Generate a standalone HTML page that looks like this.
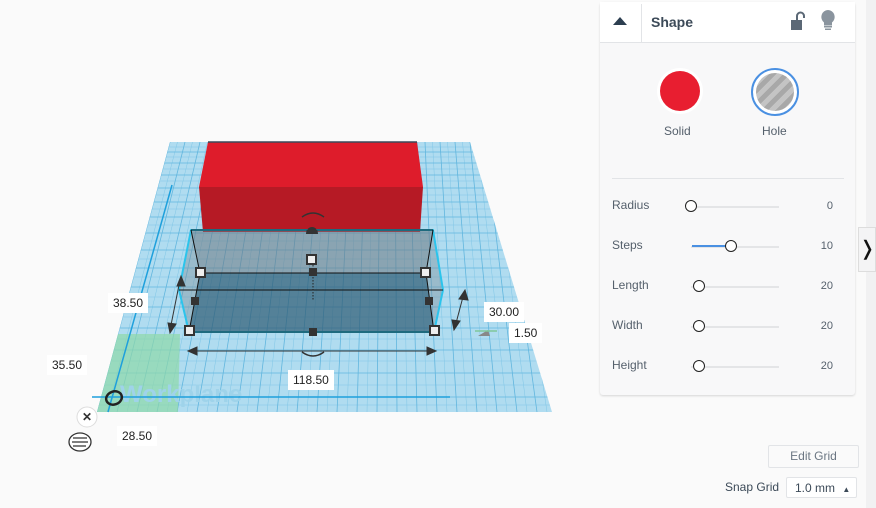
<!DOCTYPE html>
<html><head><meta charset="utf-8"><style>
body{margin:0;width:876px;height:508px;background:#fafafa;position:relative;overflow:hidden;font-family:"Liberation Sans",sans-serif;}
.lbl{position:absolute;background:#fff;font-size:12px;color:#222;padding:3px 5px;}
.panel{position:absolute;left:600px;top:2px;width:255px;height:393px;background:#f8f8f9;border-radius:3px;box-shadow:0 1px 2px rgba(0,0,0,.15);}
.hdr{height:40px;background:#fff;border-bottom:1px solid #e2e4e7;position:relative;}
.row{position:absolute;left:12px;font-size:12px;color:#55606c;}
.val{position:absolute;right:22px;font-size:11px;color:#55606c;}
.track{position:absolute;height:2px;background:#e4e5e7;}
.knob{position:absolute;width:10px;height:10px;border:1.5px solid #222;border-radius:50%;background:#fff;}
</style></head><body>
<div style="position:absolute;left:866px;top:0;width:10px;height:508px;background:#f1f1f2"></div>
<svg width="600" height="508" style="position:absolute;left:0;top:0">
<defs>
<clipPath id="wp"><polygon points="170,142 470,142 552,412 97,412"/></clipPath>
</defs>
<polygon points="170,142 470,142 552,412 97,412" fill="#b0dcf0"/>
<g clip-path="url(#wp)" stroke="#80c6e6" stroke-width="0.5">
<path d="M177.5,142L107,412M192.5,142L127,412M207.5,142L147,412M222.5,142L167,412M237.5,142L187,412M252.5,142L207,412M267.5,142L227,412M282.5,142L247,412M297.5,142L267,412M312.5,142L287,412M327.5,142L307,412M342.5,142L327,412M357.5,142L347,412M372.5,142L367,412M387.5,142L387,412M402.5,142L407,412M417.5,142L427,412M432.5,142L447,412M447.5,142L467,412M462.5,142L487,412M477.5,142L507,412M492.5,142L527,412M507.5,142L547,412"/>
<path d="M0,147H600M0,157H600M0,169H600M0,181H600M0,195H600M0,209H600M0,225H600M0,241H600M0,259H600M0,277H600M0,297H600M0,317H600M0,339H600M0,361H600M0,385H600M0,405H600"/>
</g>
<g clip-path="url(#wp)" stroke="#62b6de" stroke-width="0.8">
<path d="M170,142L97,412M185,142L117,412M200,142L137,412M215,142L157,412M230,142L177,412M245,142L197,412M260,142L217,412M275,142L237,412M290,142L257,412M305,142L277,412M320,142L297,412M335,142L317,412M350,142L337,412M365,142L357,412M380,142L377,412M395,142L397,412M410,142L417,412M425,142L437,412M440,142L457,412M455,142L477,412M470,142L497,412M485,142L517,412M500,142L537,412M515,142L557,412"/>
<path d="M0,152H600M0,163H600M0,175H600M0,188H600M0,202H600M0,217H600M0,233H600M0,250H600M0,268H600M0,287H600M0,307H600M0,328H600M0,350H600M0,373H600M0,397H600"/>
</g>
<polygon points="118,334 180,334 178,412 97,412" fill="#8fd9a8" opacity="0.7"/>
<text x="120" y="402" font-size="24" font-weight="bold" fill="#9fd3ea" font-family="Liberation Sans">Workplane</text>
<line x1="172" y1="185" x2="108" y2="412" stroke="#1ea0dc" stroke-width="1.5"/>
<line x1="92" y1="397" x2="450" y2="397" stroke="#1ea0dc" stroke-width="1.5"/>
<polygon points="208,142 417,142 423,187 199,187" fill="#de1c2b"/>
<polygon points="199,187 423,187 420,232 203,232" fill="#b61a25"/>
<line x1="208" y1="142" x2="417" y2="142" stroke="#3b4a5a" stroke-width="1.5"/>
<polygon points="191,230 433,230 426,273 200,273" fill="#6b7780" opacity="0.55"/>
<polygon points="200,273 426,273 434,332 189,332" fill="#2e5a72" opacity="0.7"/>
<polygon points="191,230 179,290 189,332 200,273" fill="#7a8a94" opacity="0.4"/>
<polygon points="433,230 443,290 434,332 426,273" fill="#7a8a94" opacity="0.4"/>
<path d="M191,230L433,230L443,290L434,332L189,332L179,290Z" fill="none" stroke="#2bc4ec" stroke-width="2"/>
<path d="M191,230H433M200,273H426M189,332H434M191,230L200,273M433,230L426,273M200,273L189,332M426,273L434,332M179,290H443" fill="none" stroke="#111" stroke-width="1"/>
<line x1="313" y1="262" x2="313" y2="300" stroke="#222" stroke-dasharray="1.5,1.5"/>
<g fill="#333"><rect x="309" y="268" width="8" height="8"/><rect x="191" y="297" width="8" height="8"/><rect x="425" y="297" width="8" height="8"/><rect x="309" y="328" width="8" height="8"/></g>
<g fill="#eee" stroke="#333" stroke-width="2"><rect x="196" y="268" width="9" height="9"/><rect x="421" y="268" width="9" height="9"/><rect x="307" y="255" width="9" height="9"/><rect x="185" y="326" width="9" height="9"/><rect x="430" y="326" width="9" height="9"/></g>
<path d="M306,234a6,7 0 0 1 12,0z" fill="#333"/>
<path d="M302,217q11,-8 22,0M302,352q11,8 22,0" fill="none" stroke="#333" stroke-width="1.5"/>
<g stroke="#333" stroke-width="1" fill="#333">
<line x1="190" y1="351" x2="434" y2="351"/><polygon points="188,351 197,347 197,355"/><polygon points="436,351 427,347 427,355"/>
<line x1="170" y1="330" x2="180" y2="280"/><polygon points="181,276 177,286 185,286"/><polygon points="170,333 168,323 176,324"/>
<line x1="455" y1="327" x2="464" y2="293"/><polygon points="465,290 459,299 468,300"/><polygon points="454,330 452,320 460,321"/>
</g>
<polygon points="478,336 488,330 490,336" fill="#888"/>
<line x1="475" y1="331" x2="497" y2="331" stroke="#7fc79a" stroke-width="1.5"/>
<ellipse cx="114" cy="398" rx="8" ry="6.5" fill="none" stroke="#222" stroke-width="2.5" transform="rotate(-20 114 398)"/>
<circle cx="87" cy="417" r="10" fill="#fff" stroke="#ddd"/>
<text x="82" y="421" font-size="12" font-weight="bold" fill="#333">✕</text>
<ellipse cx="80" cy="442" rx="11" ry="9" fill="#fff" stroke="#333" stroke-width="1.3"/>
<path d="M73,438h14M72,442h16M73,446h13" stroke="#333" stroke-width="1.2"/>
</svg>
<div class="lbl" style="left:108px;top:293px">38.50</div>
<div class="lbl" style="left:484px;top:302px">30.00</div>
<div class="lbl" style="left:509px;top:323px">1.50</div>
<div class="lbl" style="left:288px;top:370px">118.50</div>
<div class="lbl" style="left:47px;top:355px">35.50</div>
<div class="lbl" style="left:117px;top:426px">28.50</div>

<div class="panel">
<div class="hdr">
<div style="position:absolute;left:13px;top:15px;width:0;height:0;border-left:7px solid transparent;border-right:7px solid transparent;border-bottom:8px solid #2c3e50"></div>
<div style="position:absolute;left:41px;top:2px;width:1px;height:38px;background:#e2e4e7"></div>
<div style="position:absolute;left:51px;top:12px;font-size:14px;font-weight:bold;color:#3c4a58">Shape</div>
<svg style="position:absolute;left:188px;top:8px" width="20" height="24"><path d="M3,10h11v10h-11z" fill="#5b6876"/><path d="M9,10v-4a3.5,3.5 0 0 1 7,0v2" fill="none" stroke="#5b6876" stroke-width="2"/></svg>
<svg style="position:absolute;left:219px;top:6px" width="18" height="26"><path d="M9,2a7,7 0 0 1 4,12.5v3h-8v-3A7,7 0 0 1 9,2z" fill="#8a949e"/><rect x="5" y="18" width="8" height="1.5" fill="#8a949e"/><rect x="6" y="20.5" width="6" height="1.5" fill="#8a949e"/></svg>
</div>
<div style="position:absolute;left:57px;top:66px;width:46px;height:46px;border-radius:50%;background:#fff"></div>
<div style="position:absolute;left:60px;top:69px;width:40px;height:40px;border-radius:50%;background:#e81e30"></div>
<div style="position:absolute;left:64px;top:122px;font-size:12px;color:#55606c">Solid</div>
<div style="position:absolute;left:151px;top:66px;width:44px;height:44px;border-radius:50%;border:2px solid #4a90e2;background:#fff"></div>
<div style="position:absolute;left:156px;top:71px;width:38px;height:38px;border-radius:50%;background:repeating-linear-gradient(135deg,#a8a8a8 0 5px,#c4c4c4 5px 10px)"></div>
<div style="position:absolute;left:162px;top:122px;font-size:12px;color:#55606c">Hole</div>
<div style="position:absolute;left:12px;top:176px;width:232px;height:1px;background:#e2e4e7"></div>
<div class="row" style="top:196px">Radius</div><div class="track" style="left:91px;top:204px;width:88px"></div><div class="knob" style="left:85px;top:198px"></div><div class="val" style="top:198px">0</div>
<div class="row" style="top:236px">Steps</div><div class="track" style="left:91px;top:244px;width:88px"></div><div style="position:absolute;left:92px;top:243px;width:34px;height:2px;background:#4a90e2"></div><div class="knob" style="left:125px;top:238px"></div><div class="val" style="top:238px">10</div>
<div class="row" style="top:276px">Length</div><div class="track" style="left:91px;top:284px;width:88px"></div><div class="knob" style="left:93px;top:278px"></div><div class="val" style="top:278px">20</div>
<div class="row" style="top:316px">Width</div><div class="track" style="left:91px;top:324px;width:88px"></div><div class="knob" style="left:93px;top:318px"></div><div class="val" style="top:318px">20</div>
<div class="row" style="top:356px">Height</div><div class="track" style="left:91px;top:364px;width:88px"></div><div class="knob" style="left:93px;top:358px"></div><div class="val" style="top:358px">20</div>
</div>
<div style="position:absolute;left:858px;top:227px;width:18px;height:45px;background:#f4f4f5;border:1px solid #ddd;box-sizing:border-box;font-size:20px;color:#111;text-align:center;line-height:42px">❭</div>
<div style="position:absolute;left:768px;top:445px;width:89px;height:21px;border:1px solid #e2e4e7;border-radius:2px;background:#fafafa;font-size:12px;color:#6b7682;text-align:center;line-height:21px">Edit Grid</div>
<div style="position:absolute;left:725px;top:480px;font-size:12px;color:#3c4a58">Snap Grid</div>
<div style="position:absolute;left:786px;top:477px;width:71px;height:21px;border:1px solid #e2e4e7;border-radius:2px;background:#fff;font-size:12px;color:#3c4a58;line-height:21px;padding-left:8px;box-sizing:border-box">1.0 mm <span style="font-size:8px;margin-left:4px">▲</span></div>
</body></html>
